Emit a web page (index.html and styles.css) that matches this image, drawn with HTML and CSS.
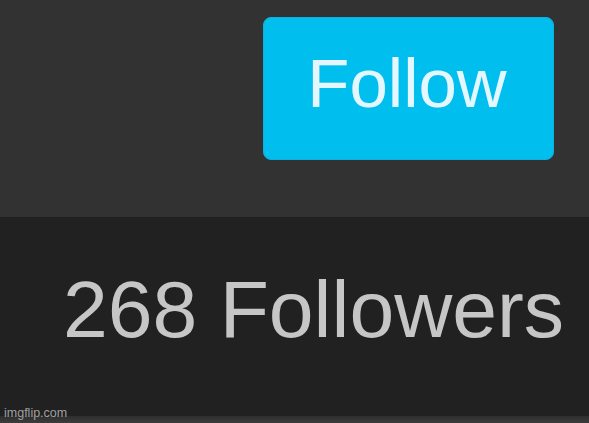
FILE: index.html
```html
<!DOCTYPE html>
<html lang="en">
<head>
  <meta charset="UTF-8" />
  <title>Follow</title>
  <link rel="stylesheet" href="styles.css">
</head>
<body>
  <div class="page">
    <header class="profile-top">
      <button class="follow-btn">Follow</button>
    </header>
    <section class="profile-stats">
      <span class="followers">268 Followers</span>
    </section>
    <div class="bottom-strip"></div>
    <span class="watermark">imgflip.com</span>
  </div>
</body>
</html>
```

FILE: styles.css
```css
* {
  box-sizing: border-box;
}

body {
  margin: 0;
  font-family: 'Liberation Sans', Arial, sans-serif;
  background: #212121;
}

.page {
  position: relative;
  width: 589px;
  height: 423px;
  display: flex;
  flex-direction: column;
  overflow: hidden;
}

.profile-top {
  height: 217px;
  background: #323232;
  display: flex;
  justify-content: flex-end;
  align-items: flex-start;
  padding: 17px 35px 0 0;
}

.follow-btn {
  width: 291px;
  height: 143px;
  border: 1px solid #12aee0;
  border-radius: 8px;
  background: #00bfef;
  color: #e4f7fe;
  font-family: inherit;
  font-size: 69px;
  line-height: 69px;
  padding: 0 3px 11px 0;
  display: flex;
  align-items: center;
  justify-content: center;
  cursor: pointer;
}

.profile-stats {
  height: 199px;
  background: #212121;
  padding: 52px 0 0 63px;
}

.followers {
  display: block;
  color: #c6c6c6;
  font-size: 80.5px;
  line-height: 80px;
  white-space: nowrap;
}

.bottom-strip {
  flex: 1;
  background: linear-gradient(#2e2e2e, #3c3c3c);
}

.watermark {
  position: absolute;
  left: 4px;
  bottom: 3px;
  font-size: 12.5px;
  line-height: 14px;
  color: #a0a0a0;
}
```
